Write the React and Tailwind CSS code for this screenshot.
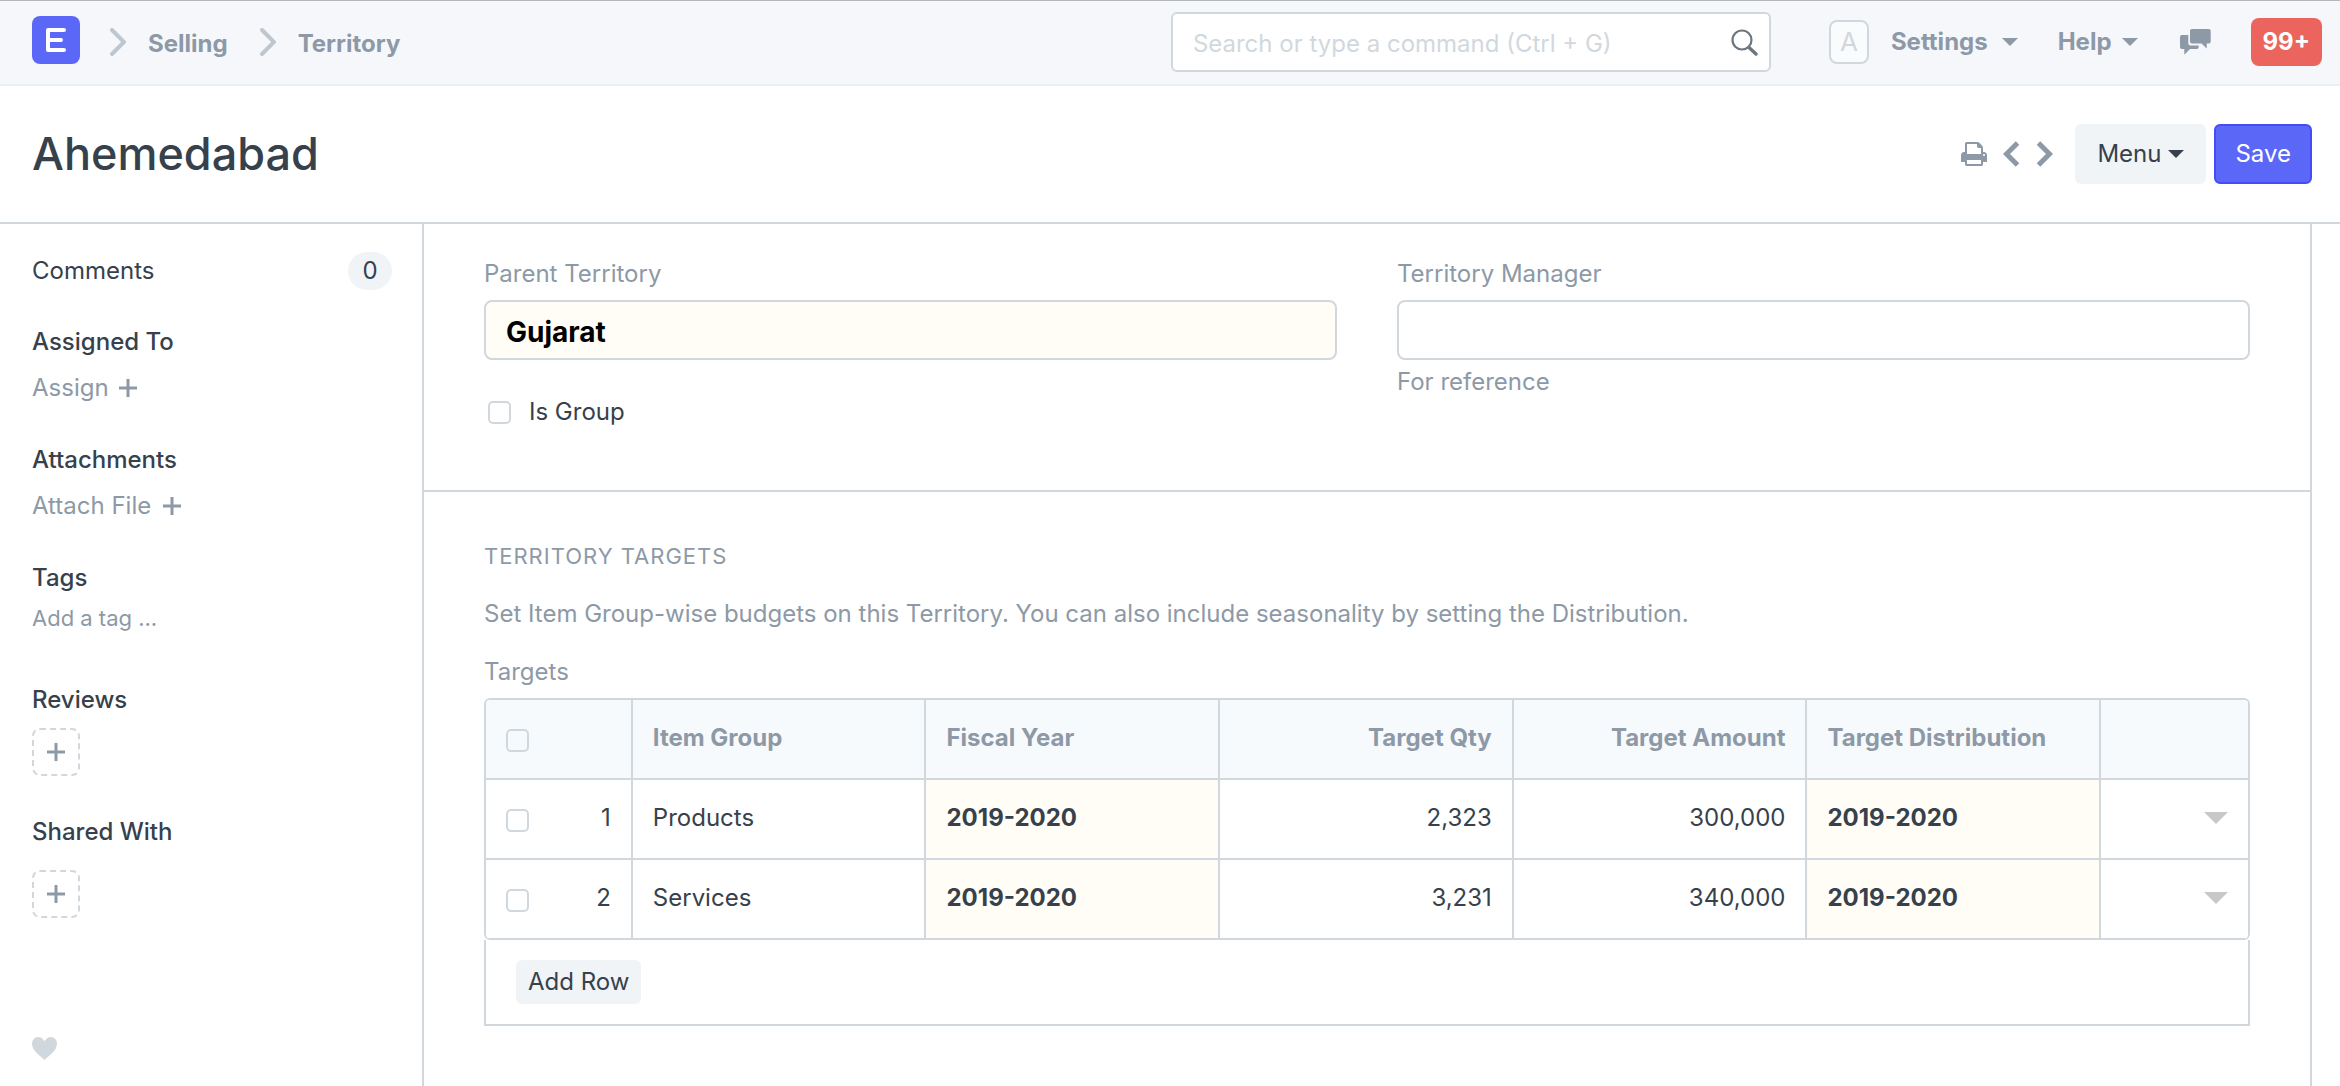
import React from "react";

const rows = [
  { id: 1, group: "Products", year: "2019-2020", qty: "2,323", amount: "300,000", dist: "2019-2020" },
  { id: 2, group: "Services", year: "2019-2020", qty: "3,231", amount: "340,000", dist: "2019-2020" },
];

function Caret({ className }) {
  return (
    <svg viewBox="0 0 16 8" className={className} fill="currentColor" aria-hidden="true">
      <path d="M0 0h16L8 8z" />
    </svg>
  );
}

function CrumbArrow() {
  return (
    <svg viewBox="0 0 16 28" className="h-7 w-4 text-[#bec7cf]" fill="none" stroke="currentColor" strokeWidth="4" aria-hidden="true">
      <path d="M2 2l12 12L2 26" strokeLinecap="round" />
    </svg>
  );
}

function Plus() {
  return (
    <svg viewBox="0 0 18 18" className="size-[18px]" stroke="currentColor" strokeWidth="3" aria-hidden="true">
      <path d="M9 0v18M0 9h18" />
    </svg>
  );
}

function Check({ label, id }) {
  return (
    <input
      id={id}
      type="checkbox"
      aria-label={label}
      className="block size-[23px] shrink-0 appearance-none rounded-[5px] border-2 border-[#d1d8dd] checked:bg-[#5b67f7]"
    />
  );
}

function Navbar() {
  return (
    <header className="flex h-[86px] items-start border-t border-b-2 border-t-[#b4b8ba] border-b-[#ebeef2] bg-[#f5f7fb] pr-[18px] pl-8 font-bold text-[#8d99a6]">
      <nav className="flex flex-1 items-center pt-[15px]" aria-label="Breadcrumb">
        <a href="#home" aria-label="Home" className="mr-[30px] grid size-12 place-items-center rounded-lg bg-[#5b67f7]">
          <svg viewBox="0 0 20 24" className="h-6 w-5" fill="none" stroke="#fff" strokeWidth="4" strokeLinecap="round" strokeLinejoin="round">
            <path d="M18 2H2v20h16M2 12h13" />
          </svg>
        </a>
        <div className="flex items-center pt-1">
          <CrumbArrow />
          <a href="#selling" className="mr-8 ml-[22px] pt-1">Selling</a>
          <CrumbArrow />
          <a href="#territory" className="ml-[22px] pt-1">Territory</a>
        </div>
      </nav>

      <form className="mt-[11px] mr-[58px] flex h-[60px] w-[600px] items-center rounded-md border-2 border-[#d1d8dd] bg-white pr-[11px] pl-5">
        <input
          type="search"
          aria-label="Search"
          placeholder="Search or type a command (Ctrl + G)"
          className="min-w-0 flex-1 pt-1 font-normal text-[#36414c] outline-none placeholder:text-[#d1d8dd]"
        />
        <button type="button" aria-label="Search">
          <svg viewBox="0 0 27 27" className="size-[27px] text-[#6c7680]" fill="none" stroke="currentColor" aria-hidden="true">
            <circle cx="11" cy="11" r="9.5" strokeWidth="2.2" />
            <path d="M18 18.500l7 6.500" strokeWidth="3.400" strokeLinecap="round" />
          </svg>
        </button>
      </form>

      <div className="flex items-center pt-[17px]">
        <span className="mr-[22px] grid h-11 w-10 place-items-center rounded-lg border-2 border-[#d1d8dd] bg-[#fafbfc] text-[26px] font-normal text-[#d1d8dd]">A</span>
        <button type="button" className="mr-10 flex items-center gap-[14px]">
          Settings <Caret className="h-2 w-4" />
        </button>
        <button type="button" className="mr-[42px] flex items-center gap-[10px]">
          Help <Caret className="h-2 w-4" />
        </button>
        <button type="button" aria-label="Chat" className="mr-10">
          <svg viewBox="0 0 31 26" className="h-[26px] w-[31px]" fill="currentColor" aria-hidden="true">
            <path d="M12 0h16.700q2 0 2 2v10.500q0 2-2 2h-2v5l-5.200-5H12q-2 0-2-2V2q0-2 2-2z" />
            <path d="M2 6h6.300v8q0 2.500 2.500 2.500h7.900v1.500q0 2-2 2H10l-5.700 5.800V20H2q-2 0-2-2V8q0-2 2-2z" />
          </svg>
        </button>
        <button type="button" className="h-12 rounded-lg bg-[#ec645e] px-3 text-white">99+</button>
      </div>
    </header>
  );
}

function PageHead() {
  return (
    <div className="flex h-[138px] items-center border-b-2 border-[#d1d8dd] pr-7 pb-px pl-8">
      <h1 className="flex-1 text-[45px] leading-[60px] font-medium">Ahemedabad</h1>
      <div className="flex items-center text-[#8d99a6]">
        <button type="button" aria-label="Print">
          <svg viewBox="0 128 1664 1536" className="h-6 w-[26px]" fill="currentColor" aria-hidden="true">
            <path d="M384 1536h896v-256h-896v256zm0-640h896v-384h-160q-40 0-68-28t-28-68v-160h-640v640zm1152 64q0-26-19-45t-45-19-45 19-19 45 19 45 45 19 45-19 19-45zm128 0v416q0 13-9.500 22.500t-22.500 9.500h-224v160q0 40-28 68t-68 28h-960q-40 0-68-28t-28-68v-160h-224q-13 0-22.500-9.500t-9.500-22.500v-416q0-79 56.500-135.500t135.500-56.500h64v-544q0-40 28-68t68-28h672q40 0 88 20t76 48l152 152q28 28 48 76t20 88v256h64q79 0 135.500 56.500t56.500 135.500z" />
          </svg>
        </button>
        <button type="button" aria-label="Previous" className="ml-4">
          <svg viewBox="0 0 17 26" className="h-[26px] w-[17px]" fill="none" stroke="currentColor" strokeWidth="5" aria-hidden="true">
            <path d="M14.500 2L3.500 13l11 11" />
          </svg>
        </button>
        <button type="button" aria-label="Next" className="ml-4">
          <svg viewBox="0 0 17 26" className="h-[26px] w-[17px]" fill="none" stroke="currentColor" strokeWidth="5" aria-hidden="true">
            <path d="M2.500 2l11 11-11 11" />
          </svg>
        </button>
        <button type="button" className="ml-[22px] flex h-[60px] items-center gap-[7px] rounded-md bg-[#f0f4f7] px-[22px] text-[#36414c]">
          Menu <Caret className="h-2 w-4" />
        </button>
        <button type="button" className="ml-2 h-[60px] rounded-md border-2 border-[#444df5] bg-[#5b67f7] px-[19px] text-white">Save</button>
      </div>
    </div>
  );
}

function AddBox({ label }) {
  return (
    <button type="button" aria-label={label} className="grid size-12 place-items-center rounded-lg border-2 border-dashed border-[#d1d8dd] text-[#8d99a6]">
      <Plus />
    </button>
  );
}

function Sidebar() {
  return (
    <aside className="flex w-[422px] shrink-0 flex-col items-start pt-7 pl-8 leading-[34px]">
      <div className="flex w-full items-center pr-[30px]">
        <a href="#comments" className="flex-1">Comments</a>
        <span className="grid h-[38px] w-11 place-items-center rounded-full bg-[#f0f4f7]">0</span>
      </div>
      <h2 className="mt-[35px] font-medium">Assigned To</h2>
      <button type="button" className="mt-3 flex items-center gap-[10px] text-[#8d99a6]">Assign <Plus /></button>
      <h2 className="mt-[38px] font-medium">Attachments</h2>
      <button type="button" className="mt-3 flex items-center gap-3 text-[#8d99a6]">Attach File <Plus /></button>
      <h2 className="mt-[38px] font-medium">Tags</h2>
      <input aria-label="Add a tag" placeholder="Add a tag ..." className="mt-[6px] w-full text-[22px] outline-none placeholder:text-[#8d99a6]" />
      <h2 className="mt-12 font-medium">Reviews</h2>
      <div className="mt-[11px]"><AddBox label="Add review" /></div>
      <h2 className="mt-[39px] font-medium">Shared With</h2>
      <div className="mt-[21px]"><AddBox label="Share" /></div>
      <button type="button" aria-label="Like" className="mt-[119px] text-[#d1d8dd]">
        <svg viewBox="0 2 12 11" className="h-[23px] w-[25px]" fill="currentColor" aria-hidden="true">
          <path d="M11.200 3c-.52-.63-1.250-.95-2.200-1-.97 0-1.690.42-2.200 1-.51.58-.78.920-.8 1-.02-.080-.280-.420-.8-1-.52-.580-1.170-1-2.200-1-.95.050-1.690.380-2.200 1-.520.610-.780 1.280-.8 2 0 .520.090 1.520.670 2.670C1.250 8.820 3.010 10.610 6 13c2.980-2.390 4.770-4.170 5.340-5.330C11.910 6.510 12 5.500 12 5c-.02-.720-.280-1.390-.8-2.020z" />
        </svg>
      </button>
    </aside>
  );
}

const th = "h-20 border-r-2 border-b-2 border-[#d1d8dd] px-5 pb-0.5 font-bold last:border-r-0";
const td = "h-20 border-r-2 border-b-2 border-[#d1d8dd] px-5 pb-0.5 last:border-r-0";

function TargetsTable() {
  return (
    <div>
      <div className="overflow-hidden rounded-md border-2 border-b-0 border-[#d1d8dd]">
        <table className="w-full table-fixed border-separate border-spacing-0">
          <colgroup>
            <col className="w-1/12" />
            <col className="w-2/12" />
            <col className="w-2/12" />
            <col className="w-2/12" />
            <col className="w-2/12" />
            <col className="w-2/12" />
            <col className="w-1/12" />
          </colgroup>
          <thead className="bg-[#f7fafc] text-left text-[#8d99a6]">
            <tr>
              <th className={th}><div className="pt-1"><Check label="Select all rows" /></div></th>
              <th className={th}>Item Group</th>
              <th className={th}>Fiscal Year</th>
              <th className={th + " text-right"}>Target Qty</th>
              <th className={th + " text-right"}>Target Amount</th>
              <th className={th}>Target Distribution</th>
              <th className={th} />
            </tr>
          </thead>
          <tbody>
            {rows.map((r) => (
              <tr key={r.id}>
                <td className={td}>
                  <div className="flex items-center justify-between">
                    <div className="pt-1"><Check label={"Select row " + r.id} /></div>
                    <span>{r.id}</span>
                  </div>
                </td>
                <td className={td}>{r.group}</td>
                <td className={td + " bg-[#fffdf5] font-bold"}>{r.year}</td>
                <td className={td + " text-right"}>{r.qty}</td>
                <td className={td + " text-right"}>{r.amount}</td>
                <td className={td + " bg-[#fffdf5] font-bold"}>{r.dist}</td>
                <td className={td}>
                  <button type="button" aria-label={"Open row " + r.id} className="ml-auto block text-[#c8c8c8]">
                    <Caret className="h-3 w-6" />
                  </button>
                </td>
              </tr>
            ))}
          </tbody>
        </table>
      </div>
      <div className="border-2 border-t-0 border-[#d1d8dd] px-[30px] py-5">
        <button type="button" className="block h-11 rounded-md bg-[#f0f4f7] px-3">Add Row</button>
      </div>
    </div>
  );
}

function Form() {
  return (
    <main className="min-w-0 flex-1 border-x-2 border-[#d1d8dd] leading-[34px]">
      <section className="grid grid-cols-2 gap-[60px] border-b-2 border-[#d1d8dd] px-[60px] pt-[33px] pb-[61px]">
        <div>
          <label htmlFor="parent" className="block text-[#8d99a6]">Parent Territory</label>
          <input id="parent" defaultValue="Gujarat" className="mt-[9px] h-[60px] w-full rounded-lg border-2 border-[#d1d8dd] bg-[#fffdf5] px-5 pt-[3px] text-[28px] font-bold text-black outline-none" />
          <div className="mt-[35px] flex items-center gap-[18px] pl-1">
            <Check id="is-group" />
            <label htmlFor="is-group">Is Group</label>
          </div>
        </div>
        <div>
          <label htmlFor="manager" className="block text-[#8d99a6]">Territory Manager</label>
          <input id="manager" className="mt-[9px] h-[60px] w-full rounded-lg border-2 border-[#d1d8dd] px-5 outline-none" />
          <p className="mt-[5px] text-[#8d99a6]">For reference</p>
        </div>
      </section>
      <section className="px-[60px] pt-[47px] pb-[60px]">
        <h2 className="text-[22px] tracking-[1px] text-[#8d99a6] uppercase">Territory Targets</h2>
        <p className="mt-6 text-[#8d99a6]">
          Set Item Group-wise budgets on this Territory. You can also include seasonality by setting the Distribution.
        </p>
        <h3 className="mt-6 mb-[9px] text-[#8d99a6]">Targets</h3>
        <TargetsTable />
      </section>
    </main>
  );
}

export default function App() {
  return (
    <div className="flex min-h-screen flex-col bg-white font-['Inter',sans-serif] text-2xl text-[#36414c]">
      <Navbar />
      <PageHead />
      <div className="flex flex-1 pr-7">
        <Sidebar />
        <Form />
      </div>
    </div>
  );
}
